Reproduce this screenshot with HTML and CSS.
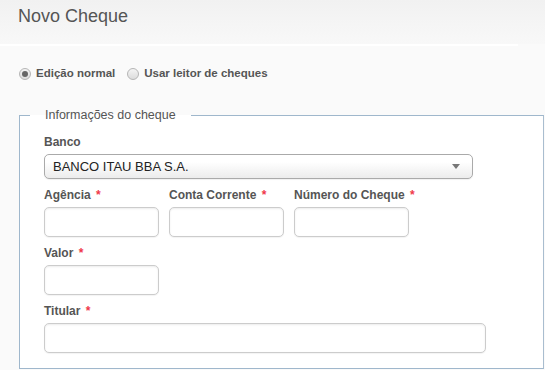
FILE: index.html
```html
<!DOCTYPE html>
<html lang="pt-BR">
<head>
    <meta charset="UTF-8">
    <title>Novo Cheque</title>
    <link rel="stylesheet" href="styles.css">
</head>
<body>
    <div class="page-header">
        <h1>Novo Cheque</h1>
    </div>
    <div class="header-rule"></div>

    <div class="modes">
        <label class="mode"><span class="radio checked"></span>Edição normal</label>
        <label class="mode"><span class="radio"></span>Usar leitor de cheques</label>
    </div>

    <fieldset class="box">
        <legend>Informações do cheque</legend>

        <div class="field">
            <label>Banco</label>
            <div class="select">
                <span>BANCO ITAU BBA S.A.</span>
                <span class="arrow"></span>
            </div>
        </div>

        <div class="row">
            <div class="field">
                <label>Agência <i>*</i></label>
                <div class="input small"></div>
            </div>
            <div class="field">
                <label>Conta Corrente <i>*</i></label>
                <div class="input small"></div>
            </div>
            <div class="field">
                <label>Número do Cheque <i>*</i></label>
                <div class="input small"></div>
            </div>
        </div>

        <div class="field">
            <label>Valor <i>*</i></label>
            <div class="input small"></div>
        </div>

        <div class="field">
            <label>Titular <i>*</i></label>
            <div class="input wide"></div>
        </div>
    </fieldset>
</body>
</html>
```

FILE: styles.css
```css
*{
    margin: 0;
    padding: 0;
    box-sizing: border-box;
}
body{
    background: #fafafa;
    font-family: "Liberation Sans", Arial, sans-serif;
    color: #555;
    overflow: hidden;
}
.page-header{
    height: 44px;
    padding: 5px 0 0 18px;
    background: linear-gradient(#f1f1f1, #f8f8f8);
}
.page-header h1{
    font-size: 18px;
    font-weight: normal;
    line-height: 22px;
    color: #555;
}
.header-rule{
    width: 518px;
    height: 2px;
    background: #fff;
}
.modes{
    display: flex;
    gap: 12px;
    padding: 20px 0 0 19px;
    height: 62px;
}
.mode{
    display: flex;
    align-items: center;
    gap: 5px;
    font-size: 11.5px;
    font-weight: bold;
    line-height: 15px;
    height: 15px;
}
.radio{
    width: 12px;
    height: 12px;
    border-radius: 50%;
    border: 1px solid #b5b5b5;
    background: linear-gradient(#f4f4f4, #dcdcdc);
    position: relative;
}
.radio.checked::after{
    content: "";
    position: absolute;
    left: 2px;
    top: 2px;
    width: 6px;
    height: 6px;
    border-radius: 50%;
    background: #666;
}
.box{
    margin-left: 19px;
    width: 525px;
    border: 1px solid #9fb7cc;
    border-right-color: #a9bdcf;
    padding: 12px 24px 15px 24px;
    background: #fff;
}
.box legend{
    margin-left: -14px;
    padding: 0 15px;
    font-size: 12.5px;
    line-height: 15px;
    color: #555;
}
.field{
    display: flex;
    flex-direction: column;
    margin-bottom: 9px;
}
.field:last-child{
    margin-bottom: 0;
}
.field label{
    font-size: 12px;
    font-weight: bold;
    line-height: 15px;
    margin-bottom: 4px;
}
.field label i{
    font-style: normal;
    color: #f0384b;
    margin-left: 2px;
}
.row{
    display: flex;
    gap: 10px;
}
.select{
    width: 429px;
    height: 25px;
    border: 1px solid #aaa;
    border-radius: 5px;
    background: linear-gradient(#fff 30%, #ececec);
    display: flex;
    align-items: center;
    justify-content: space-between;
    padding: 0 12px 0 8px;
    font-size: 13px;
    color: #222;
    box-shadow: 0 1px 1px rgba(0,0,0,0.06);
}
.arrow{
    width: 0;
    height: 0;
    border-left: 4px solid transparent;
    border-right: 4px solid transparent;
    border-top: 5px solid #777;
}
.input{
    height: 30px;
    border: 1px solid #ccc;
    border-radius: 5px;
    background: #fff;
    box-shadow: inset 0 1px 2px rgba(0,0,0,0.08), 0 1px 1px rgba(0,0,0,0.05);
}
.input.small{
    width: 115px;
}
.input.wide{
    width: 442px;
}
```
